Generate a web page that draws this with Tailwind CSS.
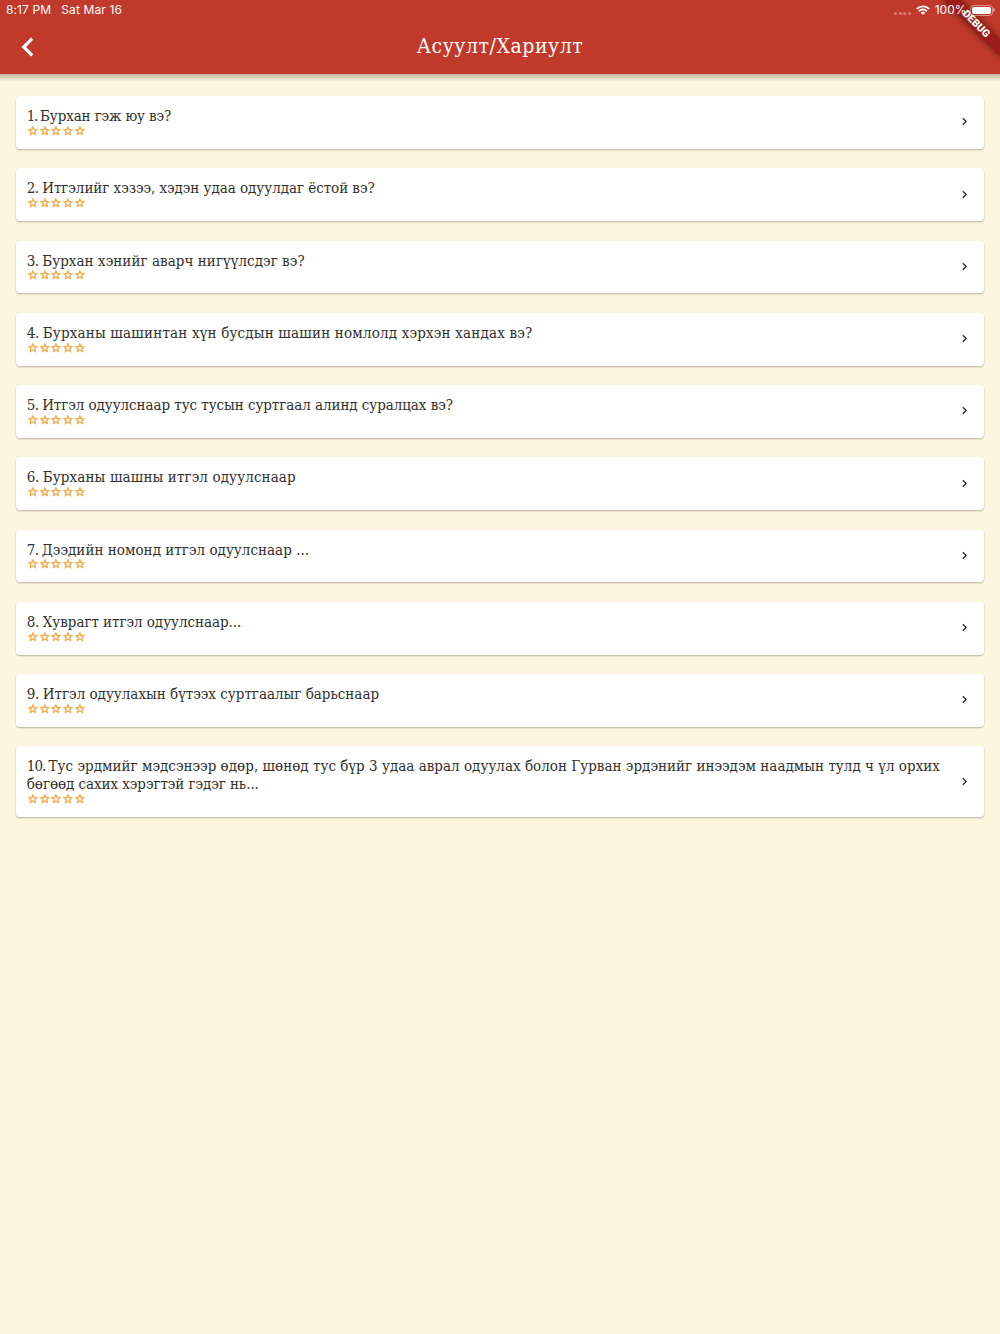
<!DOCTYPE html>
<html lang="mn">
<head>
  <meta charset="UTF-8" />
  <meta name="viewport" content="width=device-width, initial-scale=1.0"/>
  <title>Асуулт/Хариулт</title>
  <script src="https://cdn.jsdelivr.net/npm/@tailwindcss/browser@4"></script>
</head>
<body class="min-h-screen overflow-hidden bg-[#fcf6df] text-[#303030] font-['DejaVu_Serif_Condensed','DejaVu_Serif',serif]">
  <!-- Icons shared by all the rows -->
  <svg class="hidden">
    <symbol id="star" viewBox="0 0 24 24">
      <path d="M22 9.24l-7.19-.62L12 2 9.19 8.63 2 9.24l5.46 4.73L5.82 21 12 17.27 18.18 21l-1.63-7.03L22 9.24zM12 15.4l-3.76 2.27 1-4.28-3.32-2.88 4.38-.38L12 6.1l1.71 4.04 4.38.38-3.32 2.88 1 4.28L12 15.4z"/>
    </symbol>
    <symbol id="chevron" viewBox="0 0 24 24">
      <path d="M10 6L8.59 7.41 13.17 12l-4.58 4.59L10 18l6-6z"/>
    </symbol>
  </svg>

  <header class="relative h-[74px] overflow-hidden bg-[#c0392b] text-white">
    <!-- Debug ribbon -->
    <div class="absolute left-[936.7px] top-[17.5px] flex h-[12px] w-[78px] rotate-45 items-center justify-center bg-[#9c1c19] font-[Roboto,sans-serif] text-[10.5px] font-black shadow-[0_0_6px_rgba(0,0,0,0.5)]">DEBUG</div>

    <!-- Status bar -->
    <div class="relative flex h-5 items-center justify-between pl-1.5 pr-[5.5px] font-[Inter,sans-serif] text-[12px]">
      <div class="flex gap-2.5 tracking-[0.12px]">
        <span class="whitespace-pre">8:17 PM</span>
        <span class="whitespace-pre">Sat Mar 16</span>
      </div>
      <div class="flex items-center">
        <div class="mt-1.5 mr-[5px] flex gap-[1.5px]">
          <span class="size-[3px] rounded-full bg-white/35"></span>
          <span class="size-[3px] rounded-full bg-white/35"></span>
          <span class="size-[3px] rounded-full bg-white/35"></span>
          <span class="size-[3px] rounded-full bg-white/35"></span>
        </div>
        <svg class="mr-[5px] h-[10px] w-[14px]" viewBox="0 0 14 10" fill="none" stroke="white" stroke-width="1.9">
          <path d="M.8 3.9a8.8 8.8 0 0 1 12.4 0"/>
          <path d="M3 6.2a5.7 5.7 0 0 1 8 0"/>
          <path d="M7 10L4.9 7.9a3 3 0 0 1 4.2 0z" fill="white" stroke="none"/>
        </svg>
        <span class="mr-[3.5px] whitespace-pre">100%</span>
        <div class="h-[11px] w-[23px] rounded-[3.5px] border border-white/45 p-px">
          <div class="h-full rounded-[2px] bg-white"></div>
        </div>
        <span class="h-1 w-[1.5px] rounded-r bg-white/45"></span>
      </div>
    </div>

    <!-- Toolbar -->
    <div class="flex h-[54px] items-center justify-center">
      <svg class="absolute left-[21px] top-[37px] h-5 w-3" viewBox="0 0 12 20" fill="none" stroke="white" stroke-width="3.2">
        <path d="M11.2 1.6L2.7 10l8.5 8.4"/>
      </svg>
      <h1 class="whitespace-pre text-[21px] tracking-[0.55px]">Асуулт/Хариулт</h1>
    </div>
  </header>
  <div class="h-[22px] bg-linear-to-b from-black/25 via-transparent via-35% to-transparent"></div>

  <main id="list" class="flex flex-col gap-[19.5px] pl-[15.5px] pr-[15.6px]"></main>

  <script>
    // Each question: number spacing, then its lines as [number, text, letter spacing]
    const questions = [
      [-1.3, ["1. ", "Бурхан гэж юу вэ?", -0.12]],
      [-0.6, ["2. ", "Итгэлийг хэзээ, хэдэн удаа одуулдаг ёстой вэ?", -0.04]],
      [-0.6, ["3. ", "Бурхан хэнийг аварч нигүүлсдэг вэ?", 0.06]],
      [-0.4, ["4. ", "Бурханы шашинтан хүн бусдын шашин номлолд хэрхэн хандах вэ?", 0.18]],
      [-0.6, ["5. ", "Итгэл одуулснаар тус тусын суртгаал алинд суралцах вэ?", -0.06]],
      [-0.4, ["6. ", "Бурханы шашны итгэл одуулснаар", 0.12]],
      [-0.7, ["7. ", "Дээдийн номонд итгэл одуулснаар ...", 0.03]],
      [-0.4, ["8. ", "Хуврагт итгэл одуулснаар...", -0.04]],
      [-0.4, ["9. ", "Итгэл одуулахын бүтээх суртгаалыг барьснаар", 0]],
      [
        -1,
        ["10. ", "Тус эрдмийг мэдсэнээр өдөр, шөнөд тус бүр 3 удаа аврал одуулах болон Гурван эрдэнийг инээдэм наадмын тулд ч үл орхих", 0.02],
        ["", "бөгөөд сахих хэрэгтэй гэдэг нь...", -0.06]
      ]
    ];

    const star = '<svg class="size-[11.75px] fill-[#f5a031] stroke-[#f5a031] stroke-[0.8]"><use href="#star"/></svg>';

    document.getElementById('list').innerHTML = questions.map(([numberSpacing, ...lines]) => `
      <div class="flex items-center justify-between rounded-[4px] bg-white pl-[11.3px] pr-[12.8px] pt-[11px] pb-[12px] shadow-[0_1px_2px_rgba(0,0,0,0.28)]">
        <div>
          ${lines.map(([number, text, spacing]) => `
            <div class="h-[17.75px] whitespace-pre text-[15px] leading-[18px]" style="letter-spacing: ${spacing}px"><span style="letter-spacing: ${numberSpacing}px">${number}</span>${text}</div>
          `).join('')}
          <div class="flex h-[12px]">${star.repeat(5)}</div>
        </div>
        <svg class="size-[15px] fill-[#222]"><use href="#chevron"/></svg>
      </div>
    `).join('');
  </script>
</body>
</html>
